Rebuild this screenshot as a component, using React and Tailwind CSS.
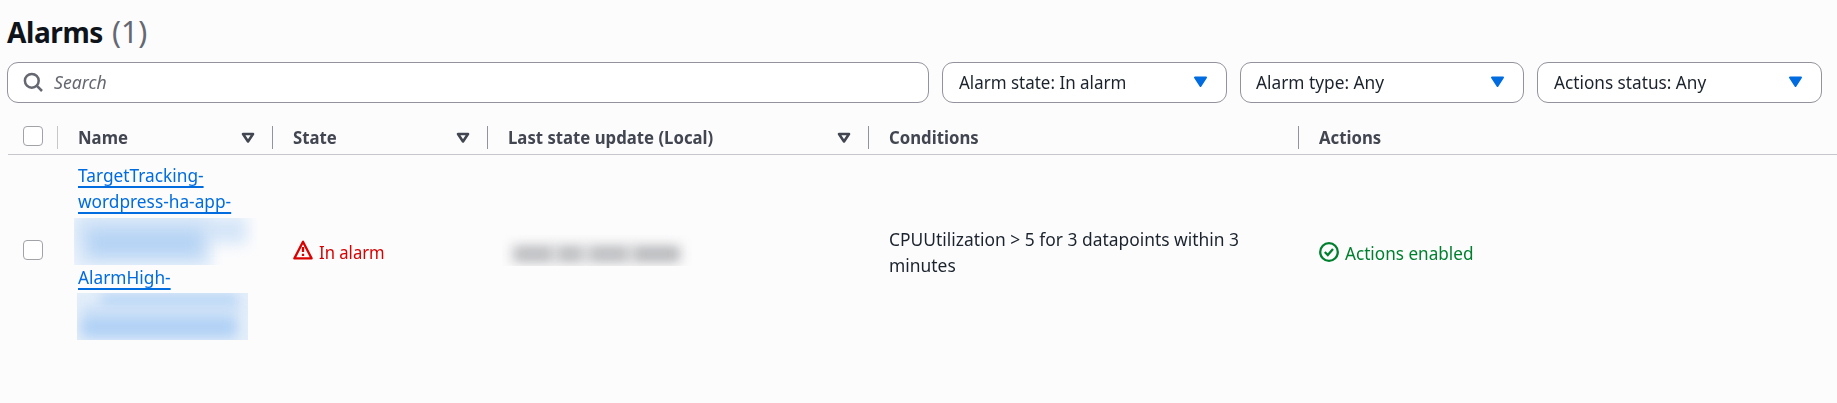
const cols = "grid grid-cols-[50px_215px_215px_381px_430px_1fr]";

function Text({ children, className = "scale-x-[0.967]" }) {
  return <span className={`block w-max origin-left whitespace-nowrap ${className}`}>{children}</span>;
}

function Checkbox() {
  return <span className="block size-5 rounded-[4px] border-[1.5px] border-[#a2a3a9] bg-white" />;
}

function Filter({ label, className }) {
  return (
    <button className="flex h-[41px] w-[284.5px] items-center justify-between rounded-[11px] border-[1.5px] border-[#93939d] bg-white pl-[15.5px] pr-[18px]">
      <Text className={className}>{label}</Text>
      <svg className="mb-px" width="15" height="12" viewBox="0 0 15 12">
        <path d="M2 1.5h11L7.5 10z" fill="#006ce0" stroke="#006ce0" strokeWidth="2" strokeLinejoin="round" />
      </svg>
    </button>
  );
}

function Head({ label, sortable, last }) {
  return (
    <div className="flex h-[23px] items-center justify-between pl-[20px]">
      <Text className="scale-x-[0.93] font-bold text-[#424650]">{label}</Text>
      {!last && (
        <div className="flex h-full items-center gap-[17px]">
          {sortable && (
            <svg width="14" height="12" viewBox="0 0 14 12">
              <path d="M2 2h10L7 9.5z" fill="none" stroke="#424650" strokeWidth="2.6" strokeLinejoin="round" />
            </svg>
          )}
          <span className="h-[23px] w-[1.5px] bg-[#93939d]" />
        </div>
      )}
    </div>
  );
}

function Link({ children }) {
  return (
    <a className="block h-[25.5px] w-max origin-left scale-x-[0.96] whitespace-nowrap leading-[25.5px] text-[#006ce0] underline decoration-[1.5px] underline-offset-[4px] [text-decoration-skip-ink:none]">
      {children}
    </a>
  );
}

export default function App() {
  return (
    <main className="h-[403px] w-[1837px] overflow-hidden bg-[#fcfcfd] pl-[7px] pt-[14px] font-['Noto_Sans',sans-serif] text-[18px] leading-[25.5px] text-[#1b232d]">
      <h1 className="flex h-[36px] items-center gap-[9px] text-[28px] leading-[36px]">
        <Text className="w-[97px] font-bold text-[#0f141a] tracking-[-0.4px]">Alarms</Text>
        <Text className="text-[30px] text-[#656871]">(1)</Text>
      </h1>

      <div className="mt-[12px] flex gap-[13px]">
        <div className="flex h-[41px] w-[922px] items-center gap-[10px] rounded-[11px] border-[1.5px] border-[#93939d] bg-white pl-[15px] text-[#656871]">
          <svg width="21" height="21" viewBox="0 0 21 21" fill="none" stroke="currentColor" strokeWidth="2.5">
            <circle cx="8.8" cy="8.8" r="6.9" />
            <path d="m13.7 13.7 5.3 5.3" />
          </svg>
          <Text className="scale-x-[0.98] italic">Search</Text>
        </div>
        <Filter label="Alarm state: In alarm" className="scale-x-[0.942]" />
        <Filter label="Alarm type: Any" className="scale-x-[0.96]" />
        <Filter label="Actions status: Any" className="scale-x-[0.955]" />
      </div>

      <div className={`${cols} ml-px mt-[18px] h-[34px] border-b-[1.5px] border-[#c6c6cd] pt-[5px]`}>
        <div className="flex h-[23px] items-start justify-between pl-[15px]">
          <Checkbox />
          <span className="h-[23px] w-[1.5px] bg-[#c6c6cd]" />
        </div>
        <Head label="Name" sortable />
        <Head label="State" sortable />
        <Head label="Last state update (Local)" sortable />
        <Head label="Conditions" />
        <Head label="Actions" last />
      </div>

      <div className={`${cols} ml-px h-[195px] items-center`}>
        <div className="pb-[5px] pl-[15px]">
          <Checkbox />
        </div>
        <div className="pl-[20px]">
          <Link>TargetTracking-</Link>
          <Link>wordpress-ha-app-</Link>
          <div className="h-[51px] pt-[4px]">
            <div className="relative -ml-[4px] h-[47px] w-[184px] overflow-hidden">
              <div className="absolute -left-[2px] -top-[2px] h-[54px] w-[140px] bg-[#e0ecfa] blur-[6px]" />
              <div className="absolute left-[3px] -top-[2px] h-[28px] w-[170px] bg-[#d6e6f8] blur-[7px]" />
              <div className="absolute left-[13px] top-[11px] h-[28px] w-[116px] bg-[#b5d3f4] blur-[8px]" />
            </div>
          </div>
          <Link>AlarmHigh-</Link>
          <div className="h-[51px] pt-[2px]">
            <div className="relative -ml-px h-[47px] w-[171px] overflow-hidden bg-[#e3eefa]">
              <div className="absolute left-[24px] top-[1px] h-[15px] w-[136px] bg-[#b9d6f6] blur-[6px]" />
              <div className="absolute left-[5px] top-[12px] h-[34px] w-[154px] bg-[#cce0f7] blur-[6px]" />
              <div className="absolute left-[6px] top-[26px] h-[16px] w-[152px] bg-[#afd0f5] blur-[6px]" />
            </div>
          </div>
        </div>
        <div className="flex items-center gap-[6px] pl-[20px] text-[#db0000]">
          <svg className="-mt-[5px]" width="20" height="20" viewBox="0 0 20 20" fill="none" stroke="currentColor" strokeWidth="2.3" strokeLinejoin="round">
            <path d="M10 1.7 1.4 18.4h17.2z" />
            <path d="M10 7v5M10 13.7v2.3" />
          </svg>
          <Text className="scale-x-[0.925]">In alarm</Text>
        </div>
        <div className="pb-[4px] pl-[14px]">
          <div className="relative h-[31px] w-[190px] overflow-hidden">
            <div className="absolute left-[10px] top-[11px] h-[16px] w-[168px] bg-[#cfd0d2] blur-[7px]" />
            <div className="absolute left-[14px] top-[13px] h-[12px] w-[34px] bg-[#c0c1c3] blur-[5px]" />
            <div className="absolute left-[58px] top-[13px] h-[12px] w-[20px] bg-[#c0c1c3] blur-[5px]" />
            <div className="absolute left-[90px] top-[13px] h-[12px] w-[34px] bg-[#c0c1c3] blur-[5px]" />
            <div className="absolute left-[134px] top-[13px] h-[12px] w-[42px] bg-[#bcbdbf] blur-[5px]" />
          </div>
        </div>
        <div className="pl-[20px]">
          <Text>CPUUtilization &gt; 5 for 3 datapoints within 3</Text>
          <Text>minutes</Text>
        </div>
        <div className="flex items-center gap-[5.5px] pl-[20px] pt-[2px] text-[#00802f]">
          <svg className="-mt-[4px]" width="20" height="20" viewBox="0 0 20 20" fill="none" stroke="currentColor" strokeWidth="2.3">
            <circle cx="10" cy="10" r="8.8" />
            <path d="m5.8 10 3 3 5.2-6" />
          </svg>
          <Text className="scale-x-[0.952]">Actions enabled</Text>
        </div>
      </div>
    </main>
  );
}
